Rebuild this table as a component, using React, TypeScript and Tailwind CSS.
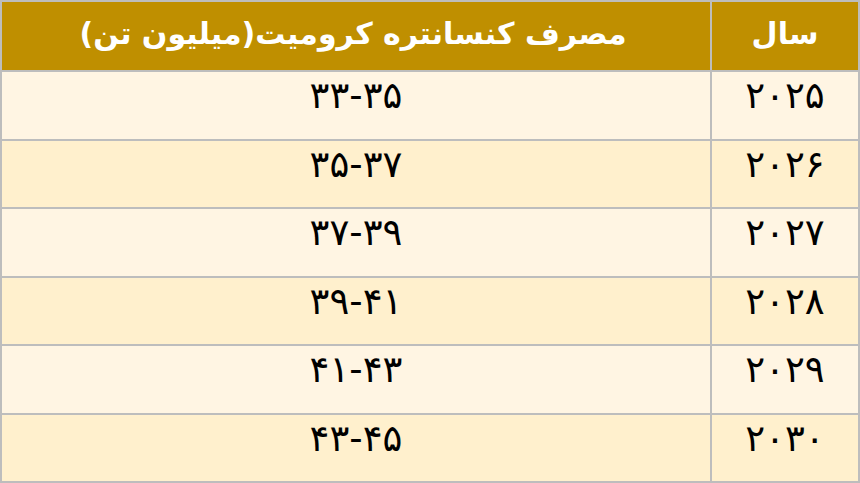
import React from "react";

const rows = [
  { year: "۲۰۲۵", val: "۳۳-۳۵" },
  { year: "۲۰۲۶", val: "۳۵-۳۷" },
  { year: "۲۰۲۷", val: "۳۷-۳۹" },
  { year: "۲۰۲۸", val: "۳۹-۴۱" },
  { year: "۲۰۲۹", val: "۴۱-۴۳" },
  { year: "۲۰۳۰", val: "۴۳-۴۵" },
];

export default function App() {
  return (
    <div
      dir="rtl"
      className="w-[860px] h-[483px] bg-[#bdbdbd] p-[2px] grid grid-cols-[146px_1fr] grid-rows-[68px_repeat(6,1fr)] gap-[2px]"
      style={{ fontFamily: '"DejaVu Sans", "Noto Sans", sans-serif' }}
    >
      <div className="bg-[#bf8f00] text-white font-bold text-[30px] leading-none flex items-center justify-center pb-[4px]">
        سال
      </div>
      <div className="bg-[#bf8f00] text-white font-bold text-[30px] leading-none flex items-center justify-center pb-[4px] pr-[6px]">
        مصرف کنسانتره کرومیت(میلیون تن)
      </div>
      {rows.map((r, i) => {
        const bg = i % 2 === 0 ? "bg-[#fff5e3]" : "bg-[#fff0cd]";
        return (
          <React.Fragment key={r.year}>
            <div className={`${bg} text-black text-[37px] leading-none flex items-start justify-center pt-[5px]`}>
              <span dir="ltr" className="tracking-[1px]">{r.year}</span>
            </div>
            <div className={`${bg} text-black text-[37px] leading-none flex items-start justify-center pt-[5px]`}>
              <span dir="ltr" className="tracking-[1.5px]">{r.val}</span>
            </div>
          </React.Fragment>
        );
      })}
    </div>
  );
}
